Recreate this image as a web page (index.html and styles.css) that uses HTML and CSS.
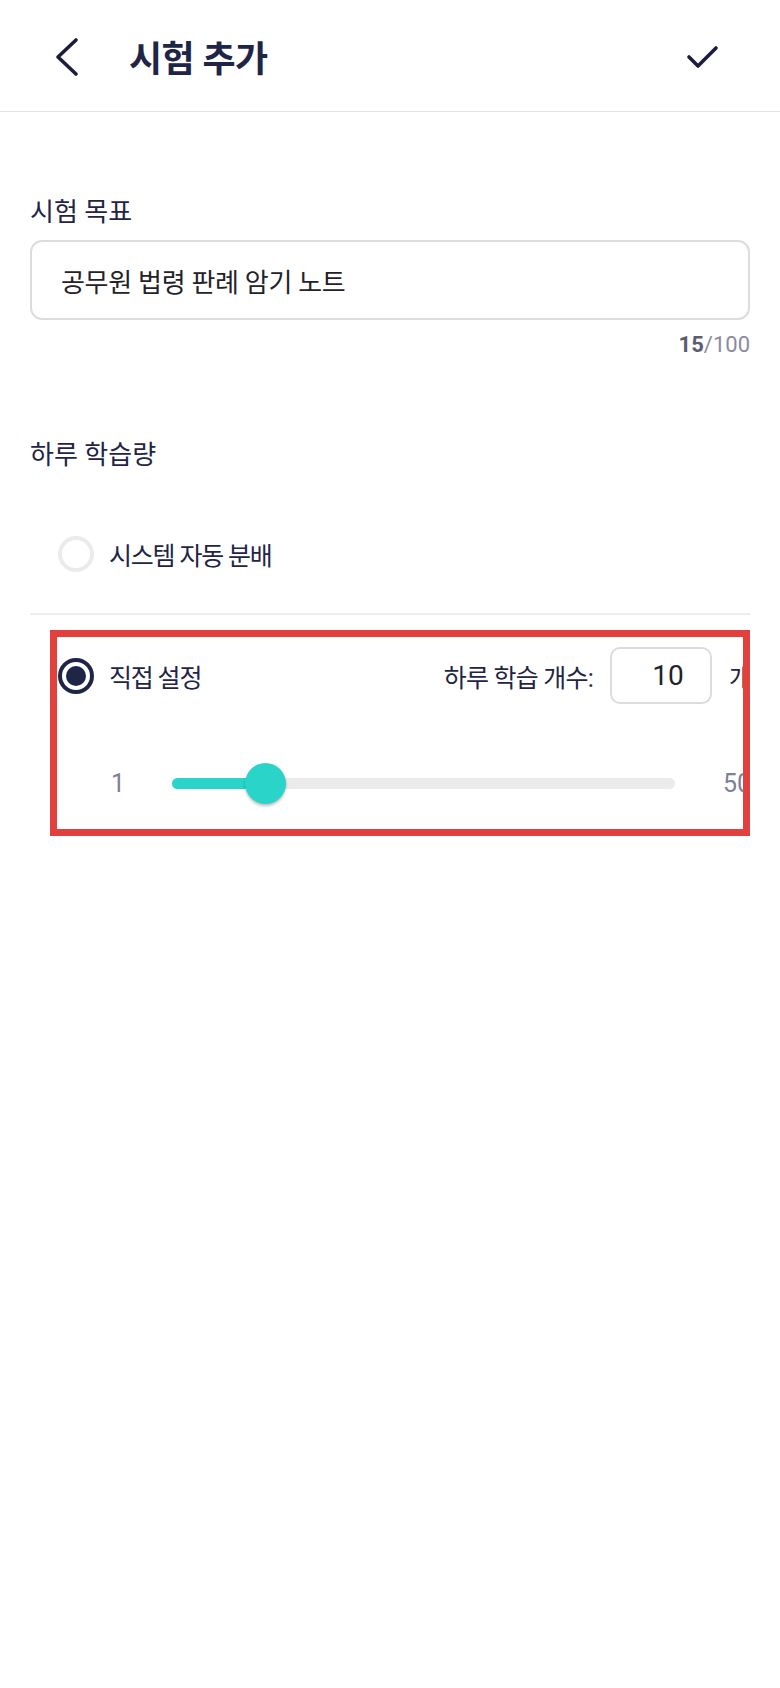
FILE: index.html
```html
<!DOCTYPE html>
<html lang="ko">

<head>
    <meta charset="utf-8">
    <meta name="viewport" content="width=device-width, initial-scale=1.0">
    <title>시험 추가</title>
    <link rel="stylesheet" href="styles.css">
</head>

<body>

    <header class="topbar">
        <button class="icon-btn back" aria-label="뒤로">
            <svg width="30" height="40" viewBox="0 0 30 40">
                <path d="M24 3 L6 20 L24 37" fill="none" stroke="#1b1d3f" stroke-width="3.6" stroke-linecap="round" stroke-linejoin="round"/>
            </svg>
        </button>
        <h1 class="title">시험 추가</h1>
        <button class="icon-btn done" aria-label="완료">
            <svg width="40" height="30" viewBox="0 0 40 30">
                <path d="M7 15 L16 24 L34 6" fill="none" stroke="#1b1d3f" stroke-width="3.6" stroke-linecap="round" stroke-linejoin="round"/>
            </svg>
        </button>
    </header>

    <main class="form">
        <label class="field-label" for="goal">시험 목표</label>
        <div class="text-box">
            <input id="goal" type="text" value="공무원 법령 판례 암기 노트">
        </div>
        <p class="counter"><b>15</b>/100</p>

        <h2 class="field-label section">하루 학습량</h2>

        <div class="option">
            <span class="radio"></span>
            <span class="option-text">시스템 자동 분배</span>
        </div>

        <hr class="divider">

        <section class="highlight">
            <div class="option custom">
                <span class="radio checked"></span>
                <span class="option-text">직접 설정</span>
                <div class="count">
                    <span class="count-label">하루 학습 개수:</span>
                    <input class="count-input" type="text" value="10">
                    <span class="count-unit">개</span>
                </div>
            </div>

            <div class="slider">
                <span class="slider-min">1</span>
                <div class="track">
                    <div class="fill" style="width: 18.4%"></div>
                    <span class="thumb" style="left: 18.4%"></span>
                </div>
                <span class="slider-max">50</span>
            </div>
        </section>
    </main>

</body>

</html>
```

FILE: styles.css
```css
body {
    margin: 0;
    background-color: white;
    font-family: Roboto, "Noto Sans CJK KR", sans-serif;
    color: #1f2547;
}

/* 상단 바 */
.topbar {
    height: 111px;
    border-bottom: 1px solid #e2e2e6;
    display: flex;
    align-items: center;
    padding: 0 50px 0 52px;
}

.icon-btn {
    background: none;
    border: 0;
    padding: 0;
    display: flex;
    cursor: pointer;
}

.back {
    margin-top: 2px;
}

.title {
    margin: 0 0 0 47px;
    font-size: 36px;
    font-weight: 700;
    letter-spacing: -0.6px;
    flex: 1;
}

.done {
    margin: 2px 8px 0 0;
}

/* 폼 */
.form {
    padding: 82px 30px 0 30px;
}

.field-label {
    display: block;
    margin: 0;
    font-size: 26px;
    font-weight: 400;
    line-height: 36px;
    letter-spacing: 0;
}

.text-box {
    margin-top: 10px;
    height: 76px;
    border: 2px solid #dcdcdf;
    border-radius: 12px;
    display: flex;
    align-items: center;
    padding: 0 29px;
}

.text-box input {
    border: 0;
    outline: none;
    width: 100%;
    padding: 0;
    font-family: Roboto, "Noto Sans CJK KR", sans-serif;
    font-size: 26px;
    letter-spacing: -0.3px;
    color: #222228;
}

.counter {
    margin: 10px 0 0 0;
    text-align: right;
    font-size: 22px;
    line-height: 30px;
    color: #8a8b9c;
}

.counter b {
    color: #5c5d72;
}

.section {
    margin-top: 77px;
}

.option {
    display: flex;
    align-items: center;
    height: 72px;
    margin: 45px 0 0 28px;
}

.radio {
    width: 28px;
    height: 28px;
    border: 4px solid #ebebeb;
    border-radius: 50%;
    flex-shrink: 0;
    position: relative;
}

.radio.checked {
    border-color: #1f2547;
}

.radio.checked::after {
    content: "";
    position: absolute;
    left: 4px;
    top: 4px;
    width: 20px;
    height: 20px;
    border-radius: 50%;
    background-color: #1f2547;
}

.option-text {
    margin-left: 15px;
    font-size: 25px;
    letter-spacing: -1.2px;
}

.divider {
    margin: 23px 0 0 0;
    border: 0;
    height: 2px;
    background-color: #ececee;
}

/* 빨간 표시 상자 */
.highlight {
    margin: 15px 0 0 20px;
    border: 7px solid #e2403c;
    overflow: hidden;
    height: 192px;
}

.option.custom {
    margin: 10px 0 0 1px;
    height: 57px;
    width: 694px;
}

.count {
    margin-left: auto;
    display: flex;
    align-items: center;
}

.count-label {
    font-size: 25px;
    letter-spacing: -0.8px;
}

.count-input {
    margin-left: 17px;
    width: 102px;
    height: 57px;
    border: 2px solid #dcdcdf;
    border-radius: 10px;
    padding: 0 0 0 14px;
    box-sizing: border-box;
    text-align: center;
    font-family: Roboto, "Noto Sans CJK KR", sans-serif;
    font-size: 28px;
    color: #222228;
    outline: none;
}

.count-unit {
    margin-left: 17px;
    font-size: 25px;
}

/* 슬라이더 */
.slider {
    display: flex;
    align-items: center;
    height: 42px;
    margin-top: 58px;
    width: 740px;
}

.slider-min,
.slider-max {
    font-size: 25px;
    color: #7c8098;
}

.slider-min {
    margin-left: 54px;
    width: 61px;
}

.slider-max {
    margin-left: 48px;
}

.track {
    position: relative;
    width: 503px;
    height: 11px;
    border-radius: 6px;
    background-color: #ebebeb;
}

.fill {
    height: 100%;
    border-radius: 6px;
    background-color: #2ad4c8;
}

.thumb {
    position: absolute;
    top: 50%;
    width: 41px;
    height: 41px;
    margin: -20px 0 0 -20px;
    border-radius: 50%;
    background-color: #2ad4c8;
    box-shadow: 0 2px 3px rgba(0, 0, 0, 0.25);
}
```
